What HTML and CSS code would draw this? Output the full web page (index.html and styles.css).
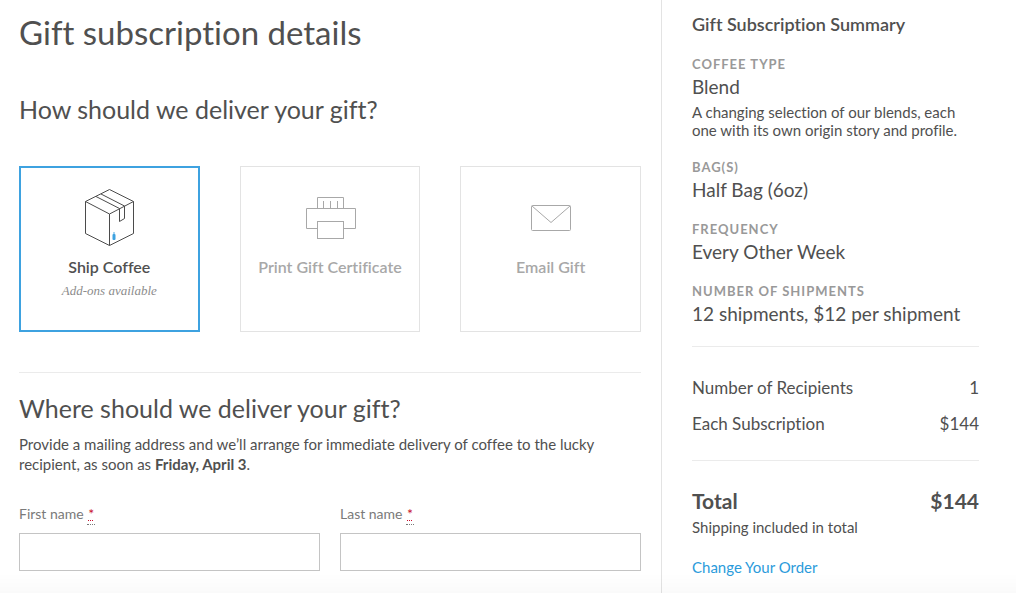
FILE: index.html
```html
<!DOCTYPE html>
<html lang="en">
  <head>
    <meta charset="UTF-8" />
    <meta name="viewport" content="width=device-width, initial-scale=1.0" />
    <title>Gift subscription details</title>
    <link rel="stylesheet" href="styles.css">
  </head>
  <body>
    <div class="page">
      <!-- Gift form -->
      <main class="details">
        <h1>Gift subscription details</h1>

        <form id="giftForm">
          <section class="delivery">
            <h2 id="deliveryTitle">How should we deliver your gift?</h2>
            <div class="options" role="radiogroup" aria-labelledby="deliveryTitle">
              <label class="option">
                <input type="radio" name="delivery" value="ship" checked />
                <svg class="icon" width="60" height="60" viewBox="0 0 60 60" fill="none" stroke="#4b4b4b" stroke-width="1" stroke-linejoin="round">
                  <path d="M30.5 2.5 L54.5 14.5 V46.5 L30.5 58.5 L6.5 46.5 V14.5 Z" />
                  <path d="M6.5 14.5 L30.5 27 L54.5 14.5 M30.5 27 V58.5" />
                  <path d="M17 9.5 L40.5 21.5 V34.5 L45.5 31.5 V19 L22 7" />
                  <rect x="33.5" y="47" width="3" height="6" rx="1" fill="#3ea2e0" stroke="none" />
                  <rect x="34" y="45" width="2" height="2" fill="#a5d4f2" stroke="none" />
                </svg>
                <span class="option-name">Ship Coffee</span>
                <span class="option-note">Add-ons available</span>
              </label>
              <label class="option">
                <input type="radio" name="delivery" value="print" />
                <svg class="icon" width="60" height="60" viewBox="0 0 60 60" fill="none" stroke="#a8a8a8" stroke-width="1">
                  <path d="M17.5 21.5 V10.5 H43.5 V21.5" />
                  <path d="M23.5 14 V21 M30.5 14 V21 M37.5 14 V21" />
                  <path d="M17.5 41.5 H6.5 V21.5 H55.5 V41.5 H43.5" />
                  <rect x="17.5" y="34.5" width="26" height="17" />
                </svg>
                <span class="option-name">Print Gift Certificate</span>
              </label>
              <label class="option">
                <input type="radio" name="delivery" value="email" />
                <svg class="icon" width="60" height="60" viewBox="0 0 60 60" fill="none" stroke="#a8a8a8" stroke-width="1">
                  <rect x="10.5" y="18.5" width="39" height="25" rx="1" />
                  <path d="M11 19 L30 35.5 L49 19" />
                </svg>
                <span class="option-name">Email Gift</span>
              </label>
            </div>
          </section>

          <section class="address">
            <h2>Where should we deliver your gift?</h2>
            <p>Provide a mailing address and we’ll arrange for immediate delivery of coffee to the lucky recipient, as soon as <strong>Friday, April 3</strong>.</p>
            <div class="fields">
              <div class="field">
                <label for="firstName">First name <abbr title="required">*</abbr></label>
                <input type="text" id="firstName" name="firstName" required />
              </div>
              <div class="field">
                <label for="lastName">Last name <abbr title="required">*</abbr></label>
                <input type="text" id="lastName" name="lastName" required />
              </div>
            </div>
          </section>
        </form>
      </main>

      <!-- Order summary -->
      <aside class="summary">
        <h3>Gift Subscription Summary</h3>
        <dl class="choices">
          <div>
            <dt>Coffee Type</dt>
            <dd>Blend</dd>
            <dd class="description">A changing selection of our blends, each one with its own origin story and profile.</dd>
          </div>
          <div>
            <dt>Bag(s)</dt>
            <dd>Half Bag (6oz)</dd>
          </div>
          <div>
            <dt>Frequency</dt>
            <dd>Every Other Week</dd>
          </div>
          <div>
            <dt>Number of Shipments</dt>
            <dd>12 shipments, $12 per shipment</dd>
          </div>
        </dl>

        <div class="costs">
          <div class="row"><span>Number of Recipients</span><span>1</span></div>
          <div class="row"><span>Each Subscription</span><span>$144</span></div>
        </div>

        <div class="total">
          <div class="row"><span>Total</span><span>$144</span></div>
          <p>Shipping included in total</p>
          <a href="#">Change Your Order</a>
        </div>
      </aside>
    </div>
  </body>
</html>
```
FILE: styles.css
```css
/* General Styling */
* {
  box-sizing: border-box;
  margin: 0;
  padding: 0;
}

body {
  font-family: Lato, sans-serif;
  font-size: 15px;
  font-variant-ligatures: none;
  color: #505050;
  background-color: #fff;
}

/* Soft shade along the bottom of the window */
body::after {
  content: "";
  position: fixed;
  left: 0;
  right: 0;
  bottom: 0;
  height: 20px;
  background: linear-gradient(rgba(0, 0, 0, 0), rgba(0, 0, 0, 0.02));
  pointer-events: none;
}

.page {
  display: grid;
  grid-template-columns: 1fr 355px;
  min-height: 100vh;
}

/* Gift Form */
.details {
  padding: 11px 20px 20px 19px;
}

h1 {
  font-size: 33px;
  line-height: 42px;
  font-weight: 400;
}

h2 {
  font-size: 25px;
  line-height: 32px;
  font-weight: 400;
}

.delivery {
  padding: 40px 0;
  border-bottom: 1px solid #ebebeb;
}

.options {
  display: grid;
  grid-template-columns: repeat(3, 1fr);
  gap: 40px;
  margin-top: 41px;
}

.option {
  display: flex;
  flex-direction: column;
  align-items: center;
  height: 166px;
  padding-top: 20px;
  border: 1px solid #e3e3e3;
  color: #a8a8a8;
  text-align: center;
  cursor: pointer;
}

.option input {
  position: absolute;
  opacity: 0;
}

.option:has(input:checked) {
  padding-top: 19px;
  border: 2px solid #3ea2e0;
  color: #505050;
}

.option-name {
  margin-top: 10px;
  font-size: 16px;
  line-height: 20px;
  font-weight: 600;
}

.option-note {
  margin-top: 5px;
  font-family: "Liberation Serif", serif;
  font-size: 13px;
  line-height: 18px;
  font-style: italic;
  color: #8c8c8c;
}

/* Address */
.address {
  padding-top: 19px;
}

.address p {
  max-width: 600px;
  margin-top: 10px;
  line-height: 20px;
}

.fields {
  display: grid;
  grid-template-columns: 1fr 1fr;
  gap: 20px;
  margin-top: 30px;
}

.field label {
  display: block;
  font-size: 14px;
  line-height: 20px;
  color: #7a7a7a;
}

.field abbr {
  padding: 0 1px 2px;
  color: #c8102e;
  border-bottom: 1px dotted #7a7a7a;
  text-decoration: underline dotted #c8102e 1px;
  text-underline-offset: 1px;
}

.field input {
  display: block;
  width: 100%;
  height: 38px;
  margin-top: 9px;
  padding: 0 10px;
  border: 1px solid #c4c4c4;
  font: inherit;
}

/* Summary */
.summary {
  padding: 12px 37px 20px 30px;
  border-left: 1px solid #e3e3e3;
}

h3 {
  font-size: 18px;
  line-height: 24px;
  font-weight: 600;
}

.choices {
  display: grid;
  gap: 16px;
  margin-top: 19px;
  padding-bottom: 18px;
}

.choices dt {
  font-size: 13px;
  line-height: 18px;
  font-weight: 700;
  letter-spacing: 1px;
  text-transform: uppercase;
  color: #999;
}

.choices dd {
  font-size: 19px;
  line-height: 28px;
}

.choices .description {
  max-width: 270px;
  margin: 2px 0 3px;
  font-size: 15px;
  line-height: 18px;
}

.costs {
  display: grid;
  gap: 16px;
  padding: 31px 0 26px;
  border-top: 1px solid #ebebeb;
  border-bottom: 1px solid #ebebeb;
  font-size: 17px;
  line-height: 20px;
}

.row {
  display: flex;
  justify-content: space-between;
}

.total {
  padding-top: 26px;
  line-height: 20px;
}

.total .row {
  font-size: 21px;
  line-height: 28px;
  font-weight: 700;
}

.total p {
  margin-top: 2px;
}

.total a {
  display: inline-block;
  margin-top: 20px;
  color: #2b9bdb;
  text-decoration: none;
}
```
